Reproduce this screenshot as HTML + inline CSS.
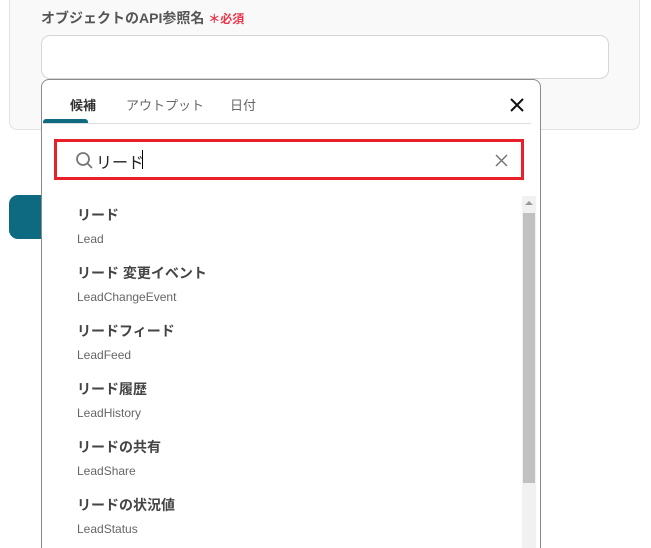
<!DOCTYPE html><html><head><meta charset="utf-8"><style>
*{box-sizing:border-box;margin:0;padding:0}
html,body{width:651px;height:548px;overflow:hidden}
body{background:#fff;font-family:"Liberation Sans","Noto Sans CJK JP",sans-serif;position:relative}
.card{position:absolute;left:9px;top:0;width:631px;height:130px;background:#f9f9f9;border:1px solid #e2e2e2;border-top:none;border-radius:0 0 8px 8px}
.lbl{position:absolute;left:41px;top:8px;font-size:14px;font-weight:bold;color:#555}
.lbl span{color:#e8334a;font-size:12px}
.inp{position:absolute;left:41px;top:35px;width:568px;height:44px;background:#fff;border:1px solid #d6d6d6;border-radius:9px}
.note{position:absolute;left:433px;top:84px;font-size:11px;color:#666}
.btn{position:absolute;left:9px;top:195px;width:100px;height:44px;background:#0e6a80;border-radius:9px}
.pop{position:absolute;left:41px;top:79px;width:500px;height:469px;background:#fff;border:1px solid #8a8a8a;border-bottom:none;border-radius:8px 8px 0 0}
.tab{position:absolute;top:95px;font-size:13px;color:#666}
.ul{position:absolute;left:43px;top:119px;width:45px;height:4px;background:#0e6a80;border-radius:3px 3px 0 0}
.div{position:absolute;left:43px;top:123px;width:488px;height:1px;background:#ddd}
.red{position:absolute;left:54px;top:139px;width:470px;height:41px;border:3px solid #e8202a}
.q{position:absolute;left:96px;top:149px;font-size:16px;color:#222}
.cur{position:absolute;left:142px;top:150px;width:1px;height:19px;background:#000}
.it{position:absolute;left:77px;font-size:14px;font-weight:bold;color:#444}
.sub{position:absolute;left:77px;font-size:12px;color:#666}
.track{position:absolute;left:522px;top:196px;width:14px;height:352px;background:#f1f1f1}
.thumb{position:absolute;left:523px;top:213px;width:12px;height:270px;background:#c1c1c1}
</style></head><body>
<div class="card"></div>
<div class="lbl">オブジェクトのAPI参照名 <span>＊必須</span></div>
<div class="inp"></div>
<div class="note">さい。</div>
<div class="btn"></div>
<div class="pop"></div>
<div class="tab" style="left:70px;color:#333;font-weight:bold">候補</div>
<div class="tab" style="left:126px">アウトプット</div>
<div class="tab" style="left:230px">日付</div>
<svg style="position:absolute;left:509px;top:97px" width="16" height="16"><path d="M2 2L14 14M14 2L2 14" stroke="#111" stroke-width="2"/></svg>
<div class="ul"></div><div class="div"></div>
<div class="red"></div>
<svg style="position:absolute;left:75px;top:151px" width="19" height="19"><circle cx="8" cy="8" r="6" fill="none" stroke="#777" stroke-width="1.8"/><path d="M12.5 12.5L17 17" stroke="#777" stroke-width="1.8"/></svg>
<div class="q">リード</div><div class="cur"></div>
<svg style="position:absolute;left:495px;top:154px" width="13" height="13"><path d="M1 1L12 12M12 1L1 12" stroke="#777" stroke-width="1.5"/></svg>
<div class="track"></div><div class="thumb"></div>
<svg style="position:absolute;left:525px;top:200px" width="8" height="6"><path d="M0 5L4 1L8 5Z" fill="#999"/></svg>
<div class="it" style="top:205px">リード</div><div class="sub" style="top:232px">Lead</div>
<div class="it" style="top:263px">リード 変更イベント</div><div class="sub" style="top:290px">LeadChangeEvent</div>
<div class="it" style="top:321px">リードフィード</div><div class="sub" style="top:348px">LeadFeed</div>
<div class="it" style="top:379px">リード履歴</div><div class="sub" style="top:406px">LeadHistory</div>
<div class="it" style="top:437px">リードの共有</div><div class="sub" style="top:464px">LeadShare</div>
<div class="it" style="top:495px">リードの状況値</div><div class="sub" style="top:522px">LeadStatus</div>
</body></html>
